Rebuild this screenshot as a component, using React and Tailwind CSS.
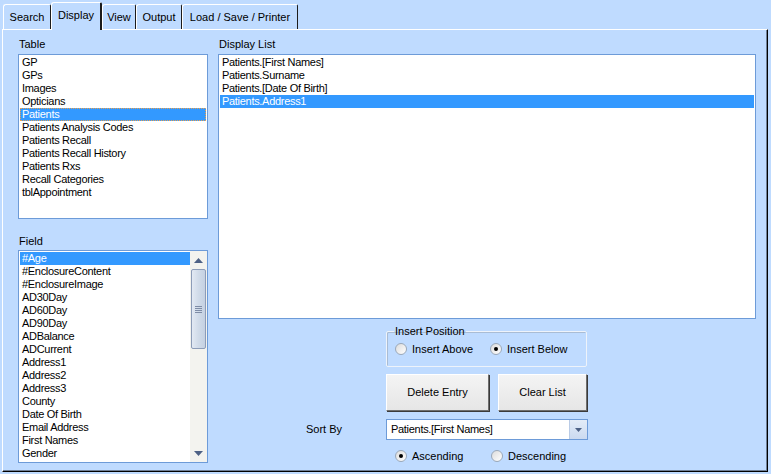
import React from "react";

const tables = [
  "GP",
  "GPs",
  "Images",
  "Opticians",
  "Patients",
  "Patients Analysis Codes",
  "Patients Recall",
  "Patients Recall History",
  "Patients Rxs",
  "Recall Categories",
  "tblAppointment",
];

const fields = [
  "#Age",
  "#EnclosureContent",
  "#EnclosureImage",
  "AD30Day",
  "AD60Day",
  "AD90Day",
  "ADBalance",
  "ADCurrent",
  "Address1",
  "Address2",
  "Address3",
  "County",
  "Date Of Birth",
  "Email Address",
  "First Names",
  "Gender",
];

const displayList = [
  "Patients.[First Names]",
  "Patients.Surname",
  "Patients.[Date Of Birth]",
  "Patients.Address1",
];

function Tab({ label, width, active }) {
  if (active) {
    return (
      <div
        className={`${width} relative z-10 -mb-px h-[28px] flex items-center justify-center bg-[#bfdbff] border-t border-l border-white border-r-2 border-r-[#1c1c1c] rounded-tl-[3px] rounded-tr-[2px] pb-[3px]`}
      >
        {label}
      </div>
    );
  }
  return (
    <div
      className={`${width} h-[25px] flex items-center justify-center bg-[#bfdbff] border-t border-l border-white border-r border-r-[#1c1c1c] rounded-tl-[3px] rounded-tr-[2px] pt-[1px]`}
    >
      {label}
    </div>
  );
}

function Row({ text, selected, focus }) {
  return (
    <div
      className={`h-[13px] leading-[13px] pl-[2px] whitespace-nowrap tracking-[-0.3px] ${
        selected ? "bg-[#3399ff] text-white" : ""
      } ${focus ? "outline outline-1 outline-dotted outline-[#e8a050] -outline-offset-1" : ""}`}
    >
      {text}
    </div>
  );
}

function Radio({ label, checked, width }) {
  return (
    <div className={`${width} flex items-center gap-[5px]`}>
      <div className="w-[12px] h-[12px] rounded-full border border-[#9aa8b8] bg-gradient-to-br from-[#dcdcdc] to-white flex items-center justify-center">
        {checked && <div className="w-[4px] h-[4px] rounded-full bg-black" />}
      </div>
      <span>{label}</span>
    </div>
  );
}

function Scrollbar() {
  return (
    <div className="w-[17px] h-full bg-[#f3f3ef] flex flex-col items-center">
      <div className="h-[18px] w-full flex items-center justify-center">
        <svg width="9" height="5" viewBox="0 0 9 5">
          <path d="M0 5 L4.5 0 L9 5 Z" fill="#4d6185" />
        </svg>
      </div>
      <div className="w-[15px] h-[80px] rounded-[2px] border border-[#8c9cb8] bg-gradient-to-r from-[#e2e9f3] via-[#d0dbe9] to-[#c5d1e2] flex flex-col items-center justify-center gap-[1px]">
        <div className="w-[7px] h-px bg-[#7e8ca6]" />
        <div className="w-[7px] h-px bg-[#7e8ca6]" />
        <div className="w-[7px] h-px bg-[#7e8ca6]" />
        <div className="w-[7px] h-px bg-[#7e8ca6]" />
      </div>
      <div className="flex-1" />
      <div className="h-[18px] w-full flex items-center justify-center">
        <svg width="9" height="5" viewBox="0 0 9 5">
          <path d="M0 0 L9 0 L4.5 5 Z" fill="#4d6185" />
        </svg>
      </div>
    </div>
  );
}

function Button({ label, width }) {
  return (
    <div
      className={`${width} h-[37px] flex items-center justify-center bg-gradient-to-b from-[#f4f4f4] to-[#e6e6e6] border border-t-white border-l-white border-r-[#6e6e6e] border-b-[#6e6e6e] shadow-[1px_1px_0_#3a3a3a]`}
    >
      {label}
    </div>
  );
}

export default function App() {
  return (
    <div
      className="w-[771px] h-[474px] bg-[#bfdbff] text-black text-[11px] overflow-hidden"
      style={{ fontFamily: '"Liberation Sans", Arial, sans-serif' }}
    >
      {/* tabs */}
      <div className="h-[29px] flex items-end pl-[3px]">
        <Tab label="Search" width="w-[48px]" />
        <Tab label="Display" width="w-[51px]" active />
        <Tab label="View" width="w-[34px]" />
        <Tab label="Output" width="w-[46px]" />
        <Tab label="Load / Save / Printer" width="w-[116px]" />
      </div>

      {/* panel */}
      <div className="ml-[2px] w-[766px] h-[443px] border-t border-l border-white border-r border-b border-r-black border-b-black shadow-[inset_-1px_-1px_0_#6f7f96] pl-[15px] pt-[7px] flex gap-[10px]">
        {/* left column */}
        <div className="w-[190px] flex flex-col">
          <div className="h-[14px] leading-[14px] pl-px mb-[3px]">Table</div>
          <div className="h-[165px] bg-white border border-[#6d9bd8] pt-px px-px">
            {tables.map((t) => (
              <Row key={t} text={t} selected={t === "Patients"} focus={t === "Patients"} />
            ))}
          </div>
          <div className="h-[14px] leading-[14px] pl-px mt-[15px] mb-[2px]">Field</div>
          <div className="h-[213px] bg-white border border-[#6d9bd8] flex">
            <div className="flex-1 pt-px pl-px overflow-hidden">
              {fields.map((f) => (
                <Row key={f} text={f} selected={f === "#Age"} />
              ))}
            </div>
            <Scrollbar />
          </div>
        </div>

        {/* right column */}
        <div className="w-[538px] flex flex-col">
          <div className="h-[14px] leading-[14px] pl-px mb-[3px]">Display List</div>
          <div className="h-[265px] bg-white border border-[#6d9bd8] pt-px px-px">
            {displayList.map((d) => (
              <Row key={d} text={d} selected={d === "Patients.Address1"} />
            ))}
          </div>

          <div className="pl-[168px]">
            <fieldset className="mt-[6px] w-[201px] h-[42px] border border-[#eef3fa] shadow-[inset_1px_1px_0_#a9bcd4] rounded-[2px] m-0 p-0">
              <legend className="ml-[7px] px-[1px] leading-[12px]">Insert Position</legend>
              <div className="flex items-center h-[24px] pl-[8px]">
                <Radio label="Insert Above" width="w-[95px]" />
                <Radio label="Insert Below" width="w-[95px]" checked />
              </div>
            </fieldset>

            <div className="mt-[7px] flex gap-[9px]">
              <Button label="Delete Entry" width="w-[103px]" />
              <Button label="Clear List" width="w-[89px]" />
            </div>
          </div>

          <div className="mt-[8px] flex items-center h-[21px]">
            <div className="w-[168px] pl-[88px]">Sort By</div>
            <div className="w-[202px] h-[21px] bg-white border border-[#6d9bd8] flex items-center">
              <span className="flex-1 pl-[4px] tracking-[-0.3px]">Patients.[First Names]</span>
              <div className="w-[18px] h-[19px] bg-gradient-to-b from-[#e3ecf8] to-[#cbdaf0] border-l border-[#b9cbe6] flex items-center justify-center">
                <svg width="7" height="4" viewBox="0 0 7 4">
                  <path d="M0 0 L7 0 L3.5 4 Z" fill="#4d6185" />
                </svg>
              </div>
            </div>
          </div>

          <div className="mt-[9px] flex items-center h-[14px] pl-[177px]">
            <Radio label="Ascending" width="w-[96px]" checked />
            <Radio label="Descending" width="w-[96px]" />
          </div>
        </div>
      </div>
    </div>
  );
}
